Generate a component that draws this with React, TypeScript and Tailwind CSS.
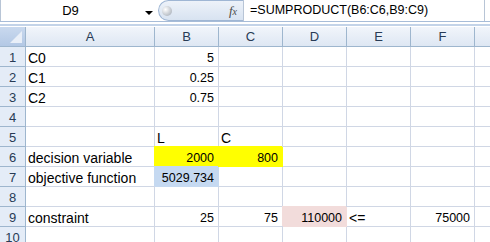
import React from "react";

type CellDef = {
  text?: string;
  align?: "left" | "right";
  fill?: "yellow" | "blue" | "pink";
};

const cols = ["A", "B", "C", "D", "E", "F", ""];

const rows: Record<number, Record<number, CellDef>> = {
  1: { 0: { text: "C0" }, 1: { text: "5", align: "right" } },
  2: { 0: { text: "C1" }, 1: { text: "0.25", align: "right" } },
  3: { 0: { text: "C2" }, 1: { text: "0.75", align: "right" } },
  5: { 1: { text: "L" }, 2: { text: "C" } },
  6: {
    0: { text: "decision variable" },
    1: { text: "2000", align: "right", fill: "yellow" },
    2: { text: "800", align: "right", fill: "yellow" },
  },
  7: {
    0: { text: "objective function" },
    1: { text: "5029.734", align: "right", fill: "blue" },
  },
  9: {
    0: { text: "constraint" },
    1: { text: "25", align: "right" },
    2: { text: "75", align: "right" },
    3: { text: "110000", align: "right", fill: "pink" },
    4: { text: "<=" },
    5: { text: "75000", align: "right" },
  },
};

const fillClass = {
  yellow: "bg-[#ffff00] border-[#ffff00] shadow-[-1px_-1px_0_0_#ffff00]",
  blue: "bg-[#c5d9f1] border-[#c5d9f1] shadow-[-1px_-1px_0_0_#c5d9f1]",
  pink: "bg-[#f2dcdb] border-[#f2dcdb] shadow-[-1px_-1px_0_0_#f2dcdb]",
};

function Cell({ def }: { def?: CellDef }) {
  const isNum = def?.align === "right";
  return (
    <div
      className={`flex items-end h-[20px] border-r border-b ${
        def?.fill ? fillClass[def.fill] : "border-[#d0d7e5] bg-white"
      } ${isNum ? "justify-end pr-[4px] text-[12.5px]" : "pl-[2px] text-[14px]"}`}
    >
      <span className="leading-[15px] text-black whitespace-nowrap">{def?.text}</span>
    </div>
  );
}

export default function App() {
  return (
    <div className="w-[490px] h-[242px] overflow-hidden bg-white font-['Liberation_Sans',Arial,sans-serif]">
      {/* formula bar */}
      <div className="flex h-[22px] border-b border-[#a7bcd8] bg-white">
        <div className="relative w-[158px] flex items-center justify-center border-l border-[#b8c5d6] text-[13px] text-black">
          <span className="-ml-[18px]">D9</span>
          <span className="absolute right-[5px] top-[11px] w-0 h-0 border-l-[4px] border-r-[4px] border-t-[4px] border-l-transparent border-r-transparent border-t-black" />
        </div>
        <div className="relative w-[85px] flex items-center justify-between rounded-l-full border border-r-0 border-[#9fb6d4] bg-gradient-to-b from-[#edf2f9] to-[#d8e3f1] pl-[3px] pr-[6px]">
          <span className="w-[10px] h-[10px] rounded-full bg-[radial-gradient(circle_at_35%_35%,#ffffff,#b9bfc7_70%,#9aa2ad)]" />
          <span className="font-['Liberation_Serif',serif] italic text-[13px] text-[#4a4a4a]">
            f<span className="text-[10px]">x</span>
          </span>
        </div>
        <div className="flex-1 flex items-center pl-[6px] border-l border-r border-[#b8c5d6] mr-[5px] text-[12.5px] text-black">
          =SUMPRODUCT(B6:C6,B9:C9)
        </div>
      </div>
      <div className="h-[2px] bg-white" />
      <div className="h-[2px] bg-[#c3d3e8]" />
      <div className="h-[1px] bg-white" />

      {/* sheet grid */}
      <div className="grid grid-cols-[26px_129px_64px_64px_64px_64px_64px_64px]">
        <div className="relative h-[20px] border-r border-b border-[#9eb6ce] bg-gradient-to-b from-[#c9d9ee] to-[#b3c8e5]">
          <svg className="absolute right-[3px] bottom-[3px]" width="12" height="12" viewBox="0 0 12 12">
            <polygon points="12,0 12,12 0,12" fill="#e9eff8" />
          </svg>
        </div>
        {cols.map((c, i) => (
          <div
            key={i}
            className="h-[20px] flex items-center justify-center border-r border-b border-[#9eb6ce] bg-gradient-to-b from-[#f1f5fb] to-[#dee7f3] text-[13px] text-[#283b55]"
          >
            {c}
          </div>
        ))}
        {Array.from({ length: 10 }, (_, r) => r + 1).map((r) => (
          <React.Fragment key={r}>
            <div className="h-[20px] flex items-end justify-center border-r border-b border-[#9eb6ce] bg-[#e4ecf7] text-[13px] text-[#283b55]">
              <span className="leading-[16px]">{r}</span>
            </div>
            {cols.map((_, ci) => (
              <Cell key={ci} def={rows[r]?.[ci]} />
            ))}
          </React.Fragment>
        ))}
      </div>
    </div>
  );
}
